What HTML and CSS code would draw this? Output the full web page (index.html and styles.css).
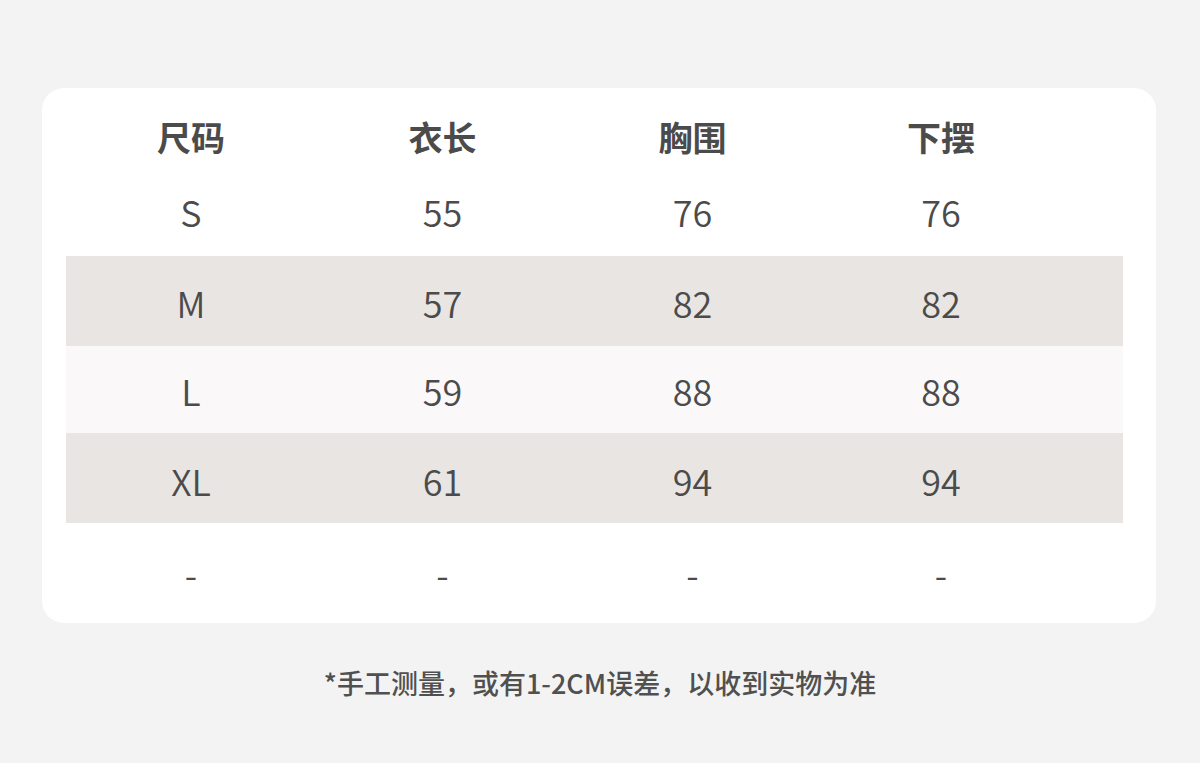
FILE: index.html
```html
<!DOCTYPE html>
<html lang="zh">
<head>
<meta charset="utf-8">
<link rel="stylesheet" href="styles.css">
</head>
<body>
<div class="page">
  <div class="card">
    <div class="table">
      <div class="row head"><div>尺码</div><div>衣长</div><div>胸围</div><div>下摆</div></div>
      <div class="row r-s"><div>S</div><div>55</div><div>76</div><div>76</div></div>
      <div class="row r-m band"><div>M</div><div>57</div><div>82</div><div>82</div></div>
      <div class="row r-l light"><div>L</div><div>59</div><div>88</div><div>88</div></div>
      <div class="row r-xl band"><div>XL</div><div>61</div><div>94</div><div>94</div></div>
      <div class="row r-dash"><div>-</div><div>-</div><div>-</div><div>-</div></div>
    </div>
  </div>
  <p class="note">*手工测量，或有1-2CM误差，以收到实物为准</p>
</div>
</body>
</html>
```
FILE: styles.css
```css
html, body {
  margin: 0;
  padding: 0;
  background: #f3f3f3;
}
body {
  width: 1200px;
  height: 763px;
  overflow: hidden;
  font-family: "Noto Sans CJK SC", "Noto Sans", sans-serif;
  color: #4b4b4b;
}
.page {
  padding: 88px 44px 0 42px;
}
.card {
  background: #ffffff;
  border-radius: 22px;
  height: 535px;
  padding: 12px 33px 0 24px;
  box-sizing: border-box;
}
.table {
  display: flex;
  flex-direction: column;
}
.row {
  display: grid;
  grid-template-columns: repeat(4, 250px);
  align-items: center;
  box-sizing: border-box;
  font-size: 36px;
  line-height: 1;
  font-weight: 350;
}
.row > div {
  text-align: center;
}
.row > div:nth-child(2),
.row > div:nth-child(3) {
  padding-left: 3px;
}
.head {
  height: 80px;
  font-size: 34px;
  font-weight: 700;
  padding-bottom: 6px;
}
.r-s { height: 76px; padding-bottom: 14px; }
.r-m { height: 90px; padding-top: 2px; }
.r-l { height: 87px; padding-top: 0; }
.r-xl { height: 90px; padding-top: 4px; }
.r-dash { height: 100px; }
.band { background: #e9e5e2; width: 1057px; }
.light { background: #faf8f8; width: 1057px; }
.note {
  margin: 45px -44px 0 -42px;
  text-align: center;
  font-size: 27px;
  line-height: 30px;
  font-weight: 500;
  color: #505050;
}
```
